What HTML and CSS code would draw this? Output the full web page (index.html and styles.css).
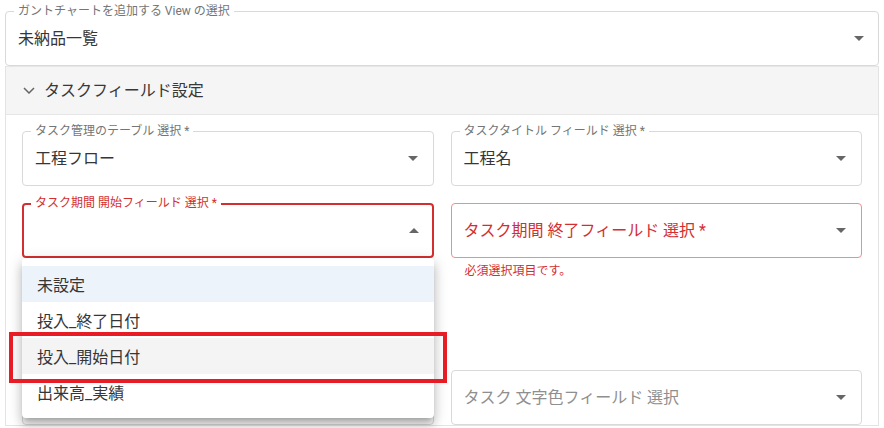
FILE: index.html
```html
<!DOCTYPE html>
<html lang="ja">
<head>
<meta charset="utf-8">
<title>ガントチャート設定</title>
<link rel="stylesheet" href="styles.css">
</head>
<body>
<div class="page">
  <div class="field field-top">
    <span class="label">ガントチャートを追加する View の選択</span>
    <span class="value">未納品一覧</span>
    <svg class="caret" width="10" height="5" viewBox="0 0 10 5"><path d="M0 0H10L5 5Z"/></svg>
  </div>

  <div class="accordion">
    <div class="acc-header">
      <svg class="chevron" width="12" height="7" viewBox="0 0 12 7"><polyline points="1,1 6,6 11,1"/></svg>
      <span class="acc-title">タスクフィールド設定</span>
    </div>
    <div class="acc-body">
      <div class="grid">
        <div class="field">
          <span class="label">タスク管理のテーブル 選択 *</span>
          <span class="value">工程フロー</span>
          <svg class="caret" width="10" height="5" viewBox="0 0 10 5"><path d="M0 0H10L5 5Z"/></svg>
        </div>
        <div class="field">
          <span class="label">タスクタイトル フィールド 選択 *</span>
          <span class="value">工程名</span>
          <svg class="caret" width="10" height="5" viewBox="0 0 10 5"><path d="M0 0H10L5 5Z"/></svg>
        </div>

        <div class="cell">
          <div class="field field-focus">
            <span class="label label-error">タスク期間 開始フィールド 選択 *</span>
            <span class="value"></span>
            <svg class="caret" width="10" height="5" viewBox="0 0 10 5"><path d="M0 5H10L5 0Z"/></svg>
          </div>
          <ul class="menu">
            <li class="item item-selected">未設定</li>
            <li class="item">投入_終了日付</li>
            <li class="item item-hover">投入_開始日付<span class="mark"></span></li>
            <li class="item">出来高_実績</li>
          </ul>
        </div>
        <div class="cell">
          <div class="field field-error">
            <span class="placeholder error-text">タスク期間 終了フィールド 選択 *</span>
            <svg class="caret" width="10" height="5" viewBox="0 0 10 5"><path d="M0 0H10L5 5Z"/></svg>
          </div>
          <p class="helper">必須選択項目です。</p>
        </div>

        <div class="field">
          <span class="placeholder"></span>
          <svg class="caret" width="10" height="5" viewBox="0 0 10 5"><path d="M0 0H10L5 5Z"/></svg>
        </div>
        <div class="empty"></div>

        <div class="field">
          <span class="placeholder"></span>
          <svg class="caret" width="10" height="5" viewBox="0 0 10 5"><path d="M0 0H10L5 5Z"/></svg>
        </div>
        <div class="field">
          <span class="placeholder">タスク 文字色フィールド 選択</span>
          <svg class="caret" width="10" height="5" viewBox="0 0 10 5"><path d="M0 0H10L5 5Z"/></svg>
        </div>
      </div>
    </div>
  </div>
</div>
</body>
</html>
```
FILE: styles.css
```css
* { box-sizing: border-box; }
html, body {
  margin: 0;
  padding: 0;
  background: #ffffff;
  overflow: hidden;
  height: 428px;
}
body {
  font-family: Roboto, "Noto Sans CJK JP", sans-serif;
  color: #333333;
}
.page {
  padding: 11px 5px 0 5px;
}
.field {
  position: relative;
  display: flex;
  align-items: center;
  height: 55px;
  border: 1px solid #d9d9d9;
  border-radius: 4px;
  padding: 0 14px 0 12px;
  background: #ffffff;
}
.label {
  position: absolute;
  top: -8px;
  left: 8px;
  padding: 0 4px;
  background: #ffffff;
  font-size: 12px;
  line-height: 14px;
  color: #757575;
  white-space: nowrap;
}
.label-error { color: #d32f2f; left: 7px; top: -9px; }
.value {
  flex: 1;
  font-size: 16px;
  line-height: 24px;
  color: #363636;
  white-space: nowrap;
}
.placeholder {
  flex: 1;
  font-size: 16px;
  line-height: 24px;
  color: #8f8f8f;
  white-space: nowrap;
}
.error-text { color: #d32f2f; }
.caret {
  flex: none;
  fill: #666666;
  margin-right: 1px;
}
.field-top .caret { margin-right: 0; }
.accordion {
  border: 1px solid #e3e3e3;
  border-top: none;
}
.acc-header {
  display: flex;
  align-items: center;
  height: 49px;
  padding-left: 17px;
  background: #f5f5f5;
  border-top: 1px solid #e6e6e6;
  border-bottom: 1px solid #e6e6e6;
}
.chevron {
  fill: none;
  stroke: #666666;
  stroke-width: 1.5;
  margin-right: 9px;
}
.acc-title {
  font-size: 16px;
  line-height: 24px;
  color: #383838;
}
.acc-body {
  padding: 16px 16px 0 16px;
}
.grid {
  display: grid;
  grid-template-columns: 1fr 1fr;
  column-gap: 17px;
  row-gap: 17px;
  align-items: start;
}
.cell {
  position: relative;
}
.field-focus {
  border: 2px solid #d32f2f;
  padding: 0 13px 0 11px;
}
.field-focus .caret { margin-right: 0; }
.field-error {
  border-color: #ec8f8f;
}
.helper {
  margin: 3px 14px 0;
  font-size: 12px;
  line-height: 20px;
  color: #d32f2f;
}
.empty { height: 55px; }
.menu {
  position: absolute;
  top: 55px;
  left: 0;
  right: 0;
  z-index: 5;
  margin: 0;
  padding: 8px 0;
  list-style: none;
  background: #ffffff;
  border-radius: 4px;
  box-shadow: 0 5px 5px -3px rgba(0,0,0,0.2), 0 8px 10px 1px rgba(0,0,0,0.14), 0 3px 14px 2px rgba(0,0,0,0.12);
}
.item {
  position: relative;
  height: 36px;
  display: flex;
  align-items: center;
  padding: 0 15px;
  font-size: 16px;
  color: #363636;
}
.item-selected { background: #ecf3fb; }
.item-hover { background: #f4f4f4; }
.mark {
  position: absolute;
  left: -13px;
  right: -13px;
  top: -6px;
  bottom: -9px;
  border: 4px solid #e81c24;
  pointer-events: none;
}
```
